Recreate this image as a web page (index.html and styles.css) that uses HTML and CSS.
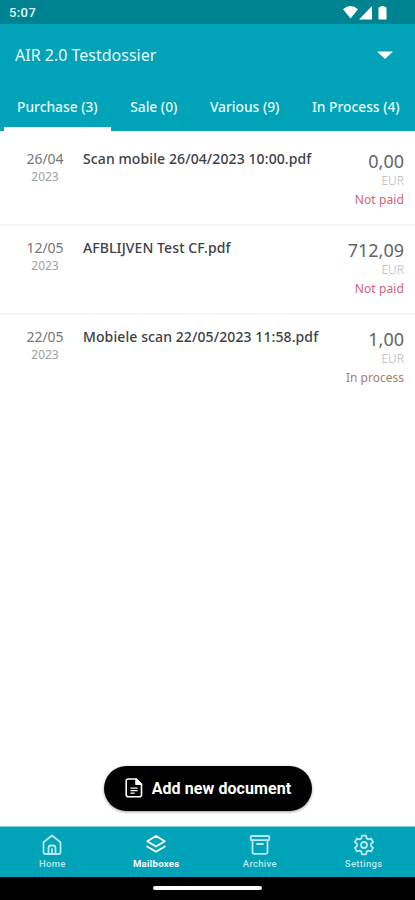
FILE: index.html
```
<!DOCTYPE html>
<html lang="en">
<head>
    <meta charset="UTF-8">
    <meta name="viewport" content="width=device-width, initial-scale=1.0">
    <title>Mailboxes</title>
    <link rel="stylesheet" href="styles.css">
</head>
<body>
    <div class="screen">
        <div class="status">
            <span class="time">5:07</span>
            <svg width="46" height="16" viewBox="0 0 46 16" fill="#fff">
                <path d="M0 4.200Q7.500-2 15 4.200L7.500 13.500z"/>
                <path d="M29 1v13.500H16z"/>
                <path d="M37.500 1h4v1.200H43.500V14.500h-8V2.200h2z"/>
            </svg>
        </div>
        <header>
            <div class="dossier">
                <h1>AIR 2.0 Testdossier</h1>
                <svg width="16" height="8" viewBox="0 0 16 8"><path d="M0 .5h16L8 8z" fill="#fff"/></svg>
            </div>
            <nav class="tabs">
                <a class="tab active">Purchase (3)</a>
                <a class="tab">Sale (0)</a>
                <a class="tab">Various (9)</a>
                <a class="tab">In Process (4)</a>
            </nav>
        </header>
        <main>
            <div class="row">
                <div class="date">26/04<span>2023</span></div>
                <div class="name">Scan mobile 26/04/2023 10:00.pdf</div>
                <div class="amount">0,00<span class="currency">EUR</span><span class="state">Not paid</span></div>
            </div>
            <div class="row">
                <div class="date">12/05<span>2023</span></div>
                <div class="name">AFBLIJVEN Test CF.pdf</div>
                <div class="amount">712,09<span class="currency">EUR</span><span class="state">Not paid</span></div>
            </div>
            <div class="row">
                <div class="date">22/05<span>2023</span></div>
                <div class="name">Mobiele scan 22/05/2023 11:58.pdf</div>
                <div class="amount">1,00<span class="currency">EUR</span><span class="state pending">In process</span></div>
            </div>
        </main>
        <button class="add">
            <svg width="18" height="20" viewBox="0 0 18 20" fill="none" stroke="#fff" stroke-width="1.6" stroke-linejoin="round">
                <path d="M3.200 1H11l5.500 5.300v10.500a2 2 0 0 1-2 2H3.200a2 2 0 0 1-2-2V3a2 2 0 0 1 2-2z"/>
                <path d="M11 1v5.300h5.500z" fill="#fff"/>
                <path d="M5.500 10.200h7M5.500 12.700h7M5.500 15.200h4" stroke-width="1.2"/>
            </svg>
            <span>Add new document</span>
        </button>
        <nav class="bottom">
            <a class="item">
                <svg width="22" height="22" viewBox="0 0 22 22">
                    <path d="M2.500 8.300 11 1.500l8.500 6.800V18a2 2 0 0 1-2 2h-13a2 2 0 0 1-2-2z"/>
                    <path d="M7.500 20v-6a2.500 2.500 0 0 1 2.500-2.500h2a2.500 2.500 0 0 1 2.500 2.500v6M11 15v5"/>
                </svg>
                <span>Home</span>
            </a>
            <a class="item current">
                <svg width="22" height="22" viewBox="0 0 22 22">
                    <path d="m11 2 8.800 5.300-8.800 5.300-8.800-5.300z"/>
                    <path d="m2.200 12.500 8.800 5.300 8.800-5.300"/>
                </svg>
                <span>Mailboxes</span>
            </a>
            <a class="item">
                <svg width="22" height="22" viewBox="0 0 22 22">
                    <rect x="1.700" y="2" width="18.600" height="4.200" rx="1"/>
                    <path d="M3.500 6.200V18a1.800 1.800 0 0 0 1.800 1.800h11.400a1.800 1.800 0 0 0 1.800-1.800V6.200M8 10h6"/>
                </svg>
                <span>Archive</span>
            </a>
            <a class="item">
                <svg width="22" height="22" viewBox="0 0 22 22">
                    <path d="M8.900 1.700h4.200l.6 2.800 1.600.9 2.700-.9 2.100 3.600-2.100 1.900v2l2.100 1.900-2.100 3.600-2.700-.9-1.600.9-.6 2.800H8.900l-.6-2.800-1.600-.9-2.700.9-2.100-3.600L4 12v-2L1.900 8.100 4 4.500l2.700.9 1.600-.9z"/>
                    <circle cx="11" cy="11" r="3"/>
                </svg>
                <span>Settings</span>
            </a>
        </nav>
        <div class="gesture"><div class="pill"></div></div>
    </div>
</body>
</html>
```
FILE: styles.css
```
*{
    margin: 0;
    padding: 0;
    box-sizing: border-box;
}
body{
    font-family: "Noto Sans", sans-serif;
    background: #fff;
}
.screen{
    width: 415px;
    height: 900px;
    display: flex;
    flex-direction: column;
    overflow: hidden;
    white-space: nowrap;
}
.status{
    height: 24px;
    padding: 2px 26px 0 9px;
    background: #008391;
    display: flex;
    justify-content: space-between;
    align-items: center;
    color: #e6f7f8;
}
.time{
    font: 500 13px/16px Roboto, sans-serif;
    letter-spacing: 0.4px;
}
header{
    height: 107px;
    background: #00a3b7;
    color: #e8fafb;
    display: flex;
    flex-direction: column;
}
.dossier{
    height: 61px;
    padding: 0 22px 0 15px;
    display: flex;
    justify-content: space-between;
    align-items: center;
}
h1{
    font-size: 16px;
    font-weight: 400;
}
.tabs{
    flex: 1;
    padding-left: 4px;
    display: flex;
    gap: 6.5px;
}
.tab{
    padding: 1px 13px 0;
    font-size: 13.8px;
    font-weight: 500;
    line-height: 41px;
    border-bottom: 4px solid transparent;
}
.active{
    border-color: #fff;
}
.row{
    height: 89px;
    padding: 0 11px 0 23px;
    display: flex;
    border-bottom: 2px solid #f6f6f6;
}
.row:first-child{
    height: 95px;
    padding-top: 6px;
}
.row:last-child{
    border: 0;
}
.date{
    width: 44px;
    padding-top: 12px;
    font-size: 14px;
    line-height: 20px;
    text-align: center;
    color: #777;
}
.date span{
    display: block;
    font-size: 12px;
    line-height: 16px;
    color: #a0a0a0;
}
.name{
    flex: 1;
    padding: 12px 0 0 16px;
    font-size: 14px;
    font-weight: 500;
    line-height: 20px;
    letter-spacing: 0.1px;
    color: #3c4048;
}
.amount{
    padding-top: 11px;
    font-size: 18px;
    line-height: 26px;
    text-align: right;
    color: #646464;
}
.amount span{
    display: block;
}
.currency{
    font-size: 12px;
    font-weight: 300;
    line-height: 14px;
    color: #b4b4b4;
}
.state{
    padding-top: 2px;
    font-size: 12px;
    line-height: 20px;
    letter-spacing: 0.1px;
    color: #d4607a;
}
.pending{
    letter-spacing: 0;
    color: #a58068;
}
.add{
    width: 208px;
    height: 45px;
    margin: auto auto 15px 104px;
    border: 0;
    border-radius: 23px;
    background: #000;
    box-shadow: 0 1px 3px rgba(0,0,0,0.4);
    color: #fff;
    font: 700 16px/20px Roboto, sans-serif;
    letter-spacing: 0.08px;
    display: flex;
    justify-content: center;
    align-items: center;
    gap: 9px;
}
.add svg{
    margin-top: -2px;
}
.bottom{
    height: 51px;
    background: #00a3b7;
    border-top: 1px solid #7fd0da;
    display: flex;
}
.item{
    width: 103.75px;
    padding: 7px 0 0 1px;
    display: flex;
    flex-direction: column;
    align-items: center;
    gap: 2px;
    font: 500 9.5px/12px Roboto, sans-serif;
    letter-spacing: 0.3px;
    color: #b9e8ee;
}
.item svg{
    fill: none;
    stroke: currentColor;
    stroke-width: 1.8;
    stroke-linejoin: round;
    stroke-linecap: round;
}
.current{
    color: #fff;
    font-weight: 700;
}
.gesture{
    height: 23px;
    background: #000;
    padding-top: 9px;
}
.pill{
    width: 109px;
    height: 4px;
    margin: 0 auto;
    border-radius: 2px;
    background: #fff;
}
```
